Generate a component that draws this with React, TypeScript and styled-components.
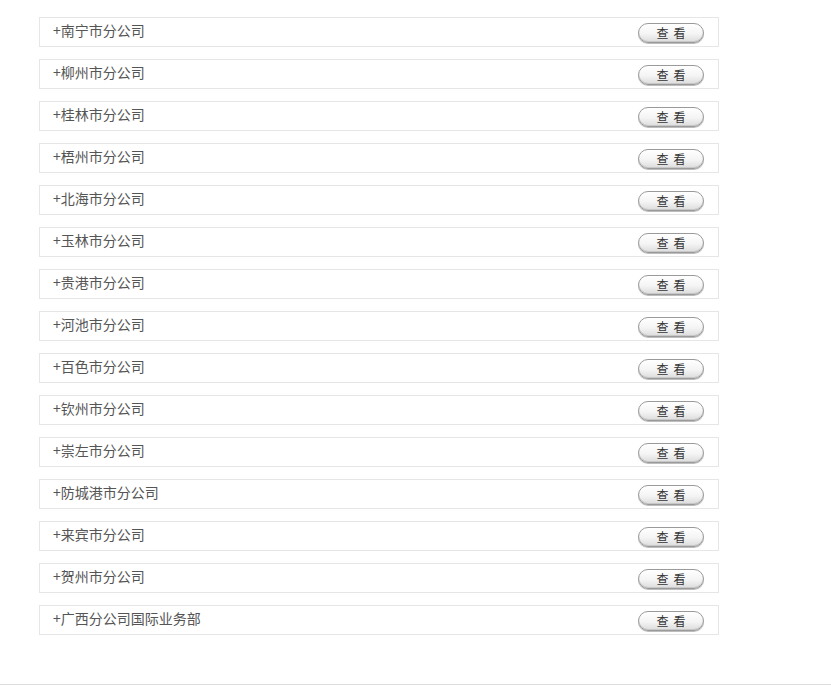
import React from "react";
import styled, { createGlobalStyle } from "styled-components";

const Global = createGlobalStyle`
  html, body { margin: 0; padding: 0; background: #fff; }
  body { font-family: "Liberation Sans", "Noto Sans CJK SC", sans-serif; }
`;

const Page = styled.div`
  padding: 17px 0 0 39px;
`;

const List = styled.ul`
  list-style: none;
  margin: 0;
  padding: 0;
  display: flex;
  flex-direction: column;
  gap: 12px;
  width: 680px;
`;

const Row = styled.li`
  box-sizing: border-box;
  height: 30px;
  border: 1px solid #e6e6e6;
  display: flex;
  align-items: center;
  justify-content: space-between;
  padding: 0 14px 0 13px;
`;

const Name = styled.span`
  font-family: "Noto Sans CJK SC", sans-serif;
  font-size: 14px;
  color: #555;
  line-height: 1;
  margin-top: -4px;
`;

const ViewButton = styled.button`
  box-sizing: border-box;
  width: 66px;
  height: 20px;
  border: 1px solid #9a9a9a;
  border-radius: 10px;
  background: linear-gradient(#ffffff 0%, #f4f4f4 55%, #dcdcdc 100%);
  box-shadow: inset 0 -1px 0 #c8c8c8, 0 1px 0 #bdbdbd;
  font-family: "Noto Sans CJK SC", sans-serif;
  font-size: 12px;
  color: #333;
  letter-spacing: 5px;
  padding: 0 0 0 5px;
  line-height: 18px;
  margin-top: 2px;
  cursor: pointer;
`;

const Footer = styled.div`
  margin-top: 49px;
  border-top: 1px solid #dcdcdc;
  height: 1px;
`;

const names = [
  "南宁市分公司",
  "柳州市分公司",
  "桂林市分公司",
  "梧州市分公司",
  "北海市分公司",
  "玉林市分公司",
  "贵港市分公司",
  "河池市分公司",
  "百色市分公司",
  "钦州市分公司",
  "崇左市分公司",
  "防城港市分公司",
  "来宾市分公司",
  "贺州市分公司",
  "广西分公司国际业务部",
];

export default function App() {
  return (
    <>
      <Global />
      <Page>
        <List>
          {names.map((n) => (
            <Row key={n}>
              <Name>+{n}</Name>
              <ViewButton>查看</ViewButton>
            </Row>
          ))}
        </List>
      </Page>
      <Footer />
    </>
  );
}
